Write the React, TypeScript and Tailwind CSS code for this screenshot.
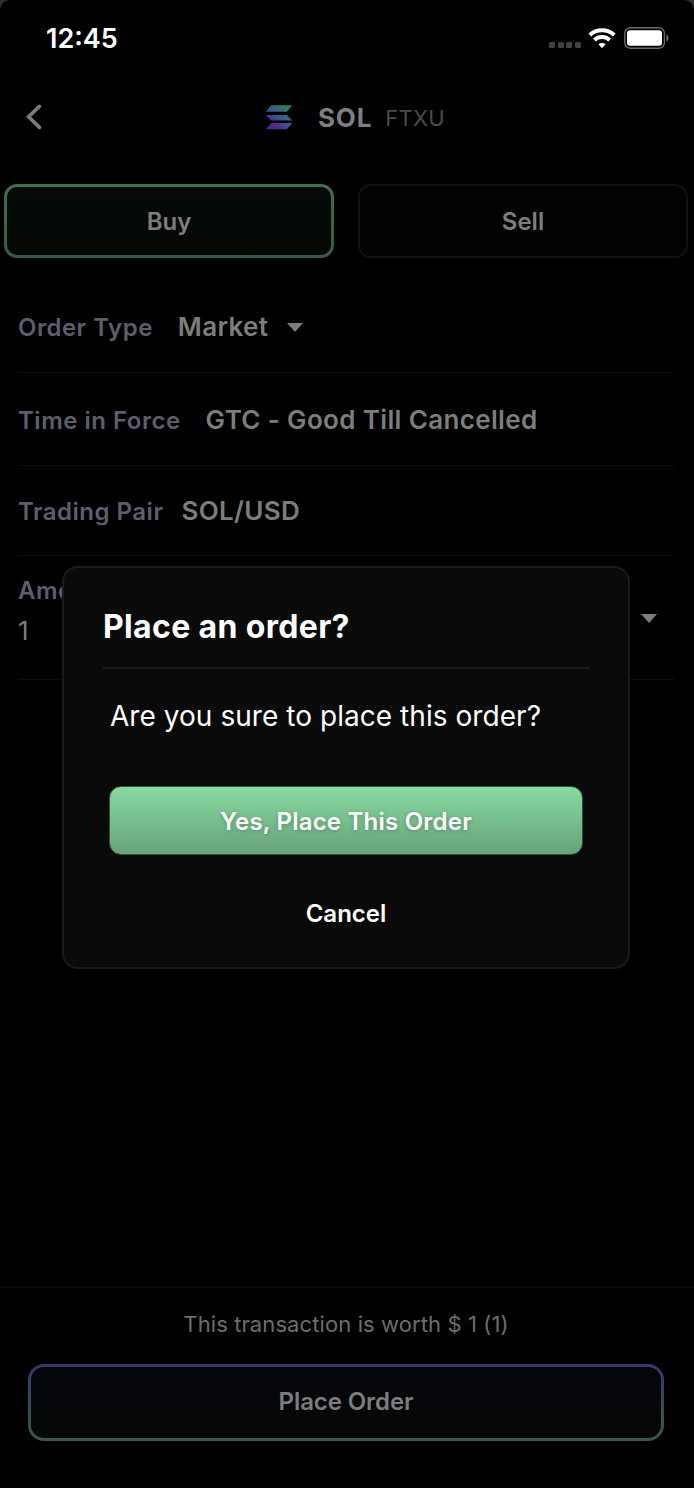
import type { ReactNode } from "react";

function Caret() {
  return (
    <svg width="16" height="9" viewBox="0 0 16 9" fill="#7d7d7d">
      <path d="M0 0H16L8 9Z" />
    </svg>
  );
}

function StatusBar() {
  return (
    <div className="flex h-[76px] shrink-0 items-center justify-between pr-[24px] pl-[46px]">
      <span className="pt-[2px] text-[27px] font-semibold text-white">12:45</span>
      <div className="flex items-center">
        <div className="mt-[13px] flex gap-[2.6px]">
          <i className="size-[6px] rounded-[1.5px] bg-[#424242]" />
          <i className="size-[6px] rounded-[1.5px] bg-[#424242]" />
          <i className="size-[6px] rounded-[1.5px] bg-[#424242]" />
          <i className="size-[6px] rounded-[1.5px] bg-[#424242]" />
        </div>
        <svg className="ml-[7px]" width="28" height="21" viewBox="0 0 28 21" fill="none" stroke="#fff">
          <path d="M1.8 6.9C8.6 0.6 19.4 0.6 26.2 6.9" strokeWidth="4.1" />
          <path d="M6.4 11.9C10.7 8 17.3 8 21.6 11.9" strokeWidth="4" />
          <path d="M14 20.3L10.4 16.3C12.4 14.6 15.6 14.6 17.6 16.3Z" fill="#fff" stroke="none" />
        </svg>
        <svg className="ml-[8px]" width="46" height="22" viewBox="0 0 46 22">
          <rect x="0.8" y="0.8" width="39.6" height="20.4" rx="5.5" fill="none" stroke="#6b6b6b" strokeWidth="1.4" />
          <rect x="3" y="3.2" width="35" height="15.6" rx="3" fill="#fff" />
          <path d="M42.5 7.5C45.2 8.6 45.2 13.4 42.5 14.5Z" fill="#777" />
        </svg>
      </div>
    </div>
  );
}

function Header() {
  return (
    <div className="flex h-[84px] shrink-0 items-center pb-[2px] pl-[26px]">
      <svg width="16" height="26" viewBox="0 0 16 26" fill="none" stroke="#7a7a7a" strokeWidth="3.6" strokeLinecap="round">
        <path d="M13.4 2.4L2.6 12.8L13.4 23.4" />
      </svg>
      <svg className="ml-[223px]" width="28" height="26" viewBox="0 0 28 26">
        <defs>
          <linearGradient id="sol" x1="26" y1="1" x2="5" y2="25" gradientUnits="userSpaceOnUse">
            <stop offset="0.1" stopColor="#34805c" />
            <stop offset="0.5" stopColor="#3c5a88" />
            <stop offset="0.85" stopColor="#51258a" />
          </linearGradient>
        </defs>
        <g fill="url(#sol)">
          <path d="M6.2 1.3H27.3L21.8 7.7H0.7Z" />
          <path d="M0.7 11H21.8L27.3 16.4H6.2Z" />
          <path d="M6.2 19H27.3L21.8 25.2H0.7Z" />
        </g>
      </svg>
      <span className="ml-[25px] pt-px text-[26px] font-bold tracking-[0.8px] text-[#7f7f7f]">SOL</span>
      <span className="ml-[13px] pt-[2px] text-[22px] tracking-[0.3px] text-[#4b4b4b]">FTXU</span>
    </div>
  );
}

type FieldProps = { label: string; value: string; className: string; gap: string; children?: ReactNode };

function Field({ label, value, className, gap, children }: FieldProps) {
  return (
    <div className={`mr-[20px] ml-[18px] flex shrink-0 items-center border-b border-[#0e0e0e] ${className}`}>
      <div className={`flex items-baseline font-semibold ${gap}`}>
        <span className="text-[24px] tracking-[0.5px] text-[#5b5f6b]">{label}</span>
        <span className="text-[26px] tracking-[0.35px] text-[#7d7d7d]">{value}</span>
      </div>
      {children}
    </div>
  );
}

function Dialog() {
  return (
    <div className="absolute top-[566px] left-[62px] flex h-[403px] w-[568px] flex-col rounded-[16px] border-[2px] border-[#1a1a1a] bg-[#0a0a0a] px-[39px] pt-[38px] text-white">
      <h1 className="h-[63px] border-b-2 border-[#1c1c1c] pt-px text-[32px] leading-[40px] font-bold tracking-[0.35px]">
        Place an order?
      </h1>
      <p className="mt-[28px] pl-[7px] text-[28px] leading-[38px] tracking-[0.05px]">Are you sure to place this order?</p>
      <button className="mx-[6px] mt-[51px] flex h-[69px] shrink-0 items-center justify-center rounded-[12px] border border-[#2f5039] bg-linear-to-b from-[#89dba1] to-[#67a27b] bg-origin-border pt-[2px] text-[24px] font-semibold tracking-[0.22px] text-shadow-[0_1px_4px_rgba(0,0,0,0.25)]">
        Yes, Place This Order
      </button>
      <button className="mt-[38px] h-[40px] pt-px text-[24px] font-semibold">Cancel</button>
    </div>
  );
}

export default function App() {
  return (
    <div className="h-[1488px] w-[694px] bg-[#303030]">
      <div className="relative flex h-full w-full flex-col overflow-hidden rounded-t-[10px] bg-black font-['Inter',sans-serif]">
        <StatusBar />
        <Header />
        <div className="mt-[24px] grid h-[74px] shrink-0 grid-cols-2 gap-[24px] pr-[6px] pl-[4px] text-[24px] font-semibold text-[#7d7d7d]">
          <button className="rounded-[13px] border-[3px] border-transparent pt-[2px] [background:linear-gradient(#040a07,#060805)_padding-box,linear-gradient(#426e4e,#365a41)_border-box]">
            Buy
          </button>
          <button className="rounded-[13px] border-2 border-[#111] bg-[#020202] pt-[2px]">Sell</button>
        </div>
        <Field label="Order Type" value="Market" gap="gap-[25px]" className="mt-[22px] h-[93px]">
          <div className="mt-[3px] ml-[19px]">
            <Caret />
          </div>
        </Field>
        <Field label="Time in Force" value="GTC - Good Till Cancelled" gap="gap-[25px]" className="h-[93px]" />
        <Field label="Trading Pair" value="SOL/USD" gap="gap-[18px]" className="h-[90px] pb-px" />
        <div className="mr-[20px] ml-[18px] flex h-[124px] shrink-0 items-center justify-between border-b border-[#0e0e0e] pr-[17px]">
          <div className="flex flex-col pb-[13px]">
            <span className="text-[24px] leading-[40px] font-semibold tracking-[0.5px] text-[#5b5f6b]">Amount</span>
            <span className="text-[26px] leading-[40px] text-[#7d7d7d]">1</span>
          </div>
          <div className="pt-[2px]">
            <Caret />
          </div>
        </div>
        <div className="mt-auto flex h-[202px] shrink-0 flex-col border-t-2 border-[#090909] pt-[16px] pr-[30px] pl-[28px]">
          <p className="text-center text-[22px] leading-[40px] tracking-[0.1px] text-[#6d6d6d]">
            This transaction is worth $ 1 (1)
          </p>
          <button className="mt-[20px] h-[77px] rounded-[16px] border-[3px] border-transparent pb-[2px] text-[24px] font-semibold tracking-[-0.1px] text-[#7d7d7d] [background:linear-gradient(#04050c,#050805)_padding-box,linear-gradient(#32386c,#365c44)_border-box]">
            Place Order
          </button>
        </div>
        <Dialog />
      </div>
    </div>
  );
}
